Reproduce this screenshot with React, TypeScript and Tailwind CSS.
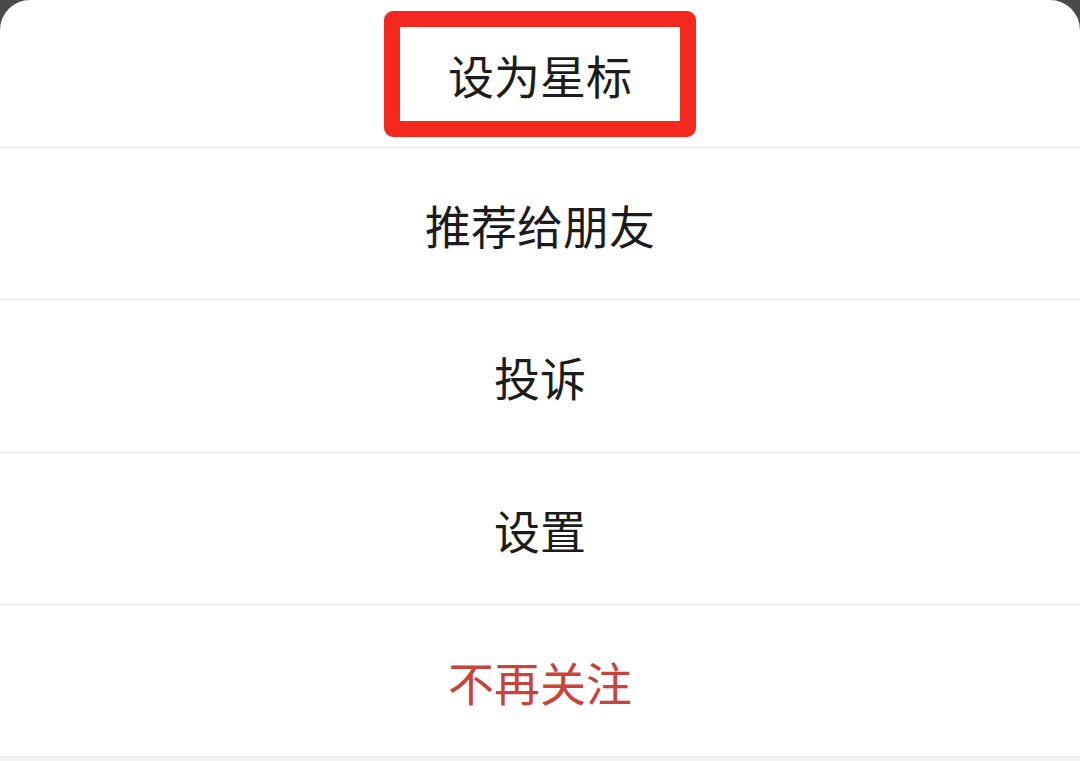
import React from "react";

const items = [
  { label: "推荐给朋友", red: false, h: "h-[152px]" },
  { label: "投诉", red: false, h: "h-[153px]" },
  { label: "设置", red: false, h: "h-[152px]" },
  { label: "不再关注", red: true, h: "h-[152px]" },
];

export default function App() {
  return (
    <div
      className="w-[1080px] h-[761px] bg-[#4a4a4a] overflow-hidden"
      style={{ fontFamily: '"Noto Sans CJK SC", "Noto Sans", sans-serif' }}
    >
      <div className="h-full bg-white rounded-t-[30px] flex flex-col">
        <div className="h-[148px] shrink-0 flex items-center justify-center border-b border-[#e5e5e5]">
          <div className="w-[312px] h-[126px] border-[16px] border-[#f5281f] rounded-[9px] flex items-center justify-center">
            <span className="text-[46px] leading-none text-[#1c1c1c]">设为星标</span>
          </div>
        </div>
        {items.map((it) => (
          <div
            key={it.label}
            className={it.h + " shrink-0 flex items-center justify-center border-b border-[#e5e5e5]"}
          >
            <span
              className={
                "text-[46px] leading-none " +
                (it.red ? "text-[#c8433a]" : "text-[#1c1c1c]")
              }
            >
              {it.label}
            </span>
          </div>
        ))}
        <div className="flex-1 bg-[#f5f5f5]" />
      </div>
    </div>
  );
}
